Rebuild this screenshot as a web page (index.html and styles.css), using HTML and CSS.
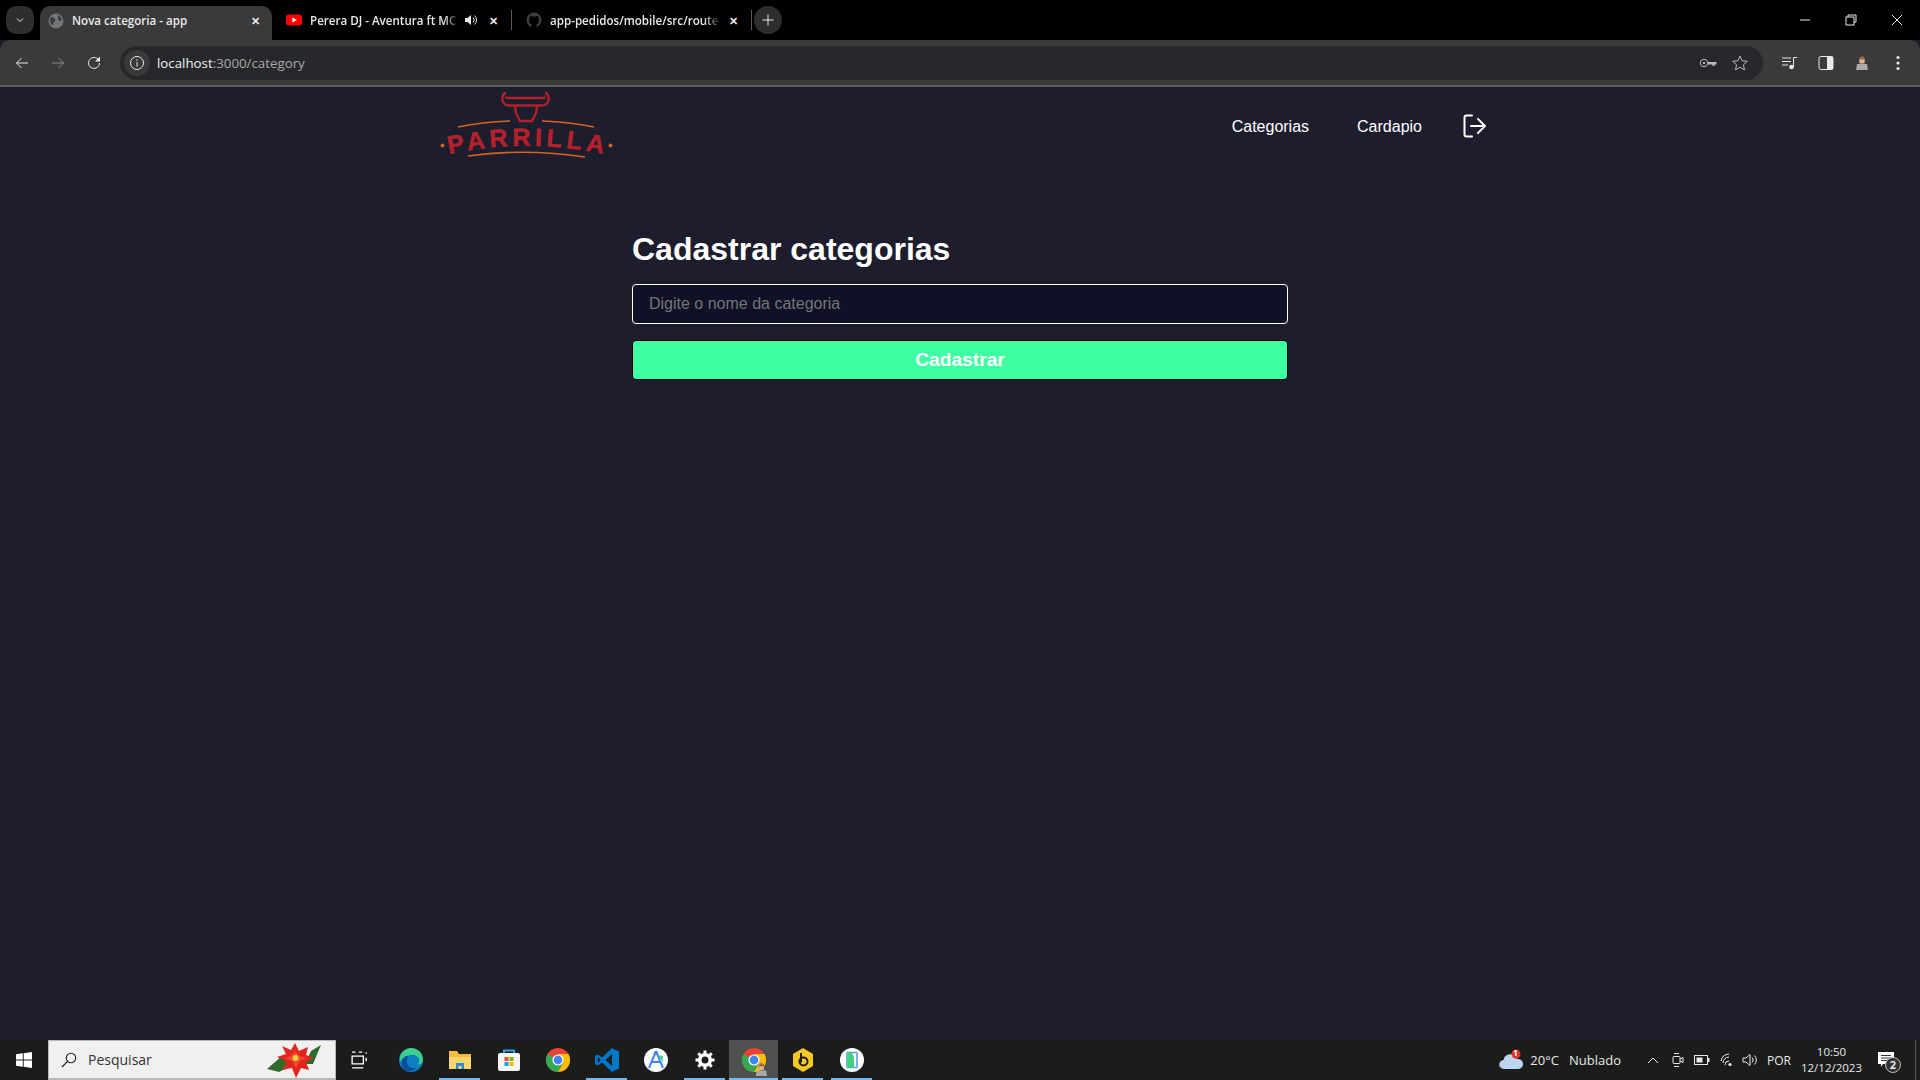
FILE: index.html
```html
<!DOCTYPE html>
<html lang="pt-BR">
<head>
    <meta charset="UTF-8">
    <title>Nova categoria - app</title>
    <link rel="stylesheet" href="styles.css">
</head>
<body>
    <svg class="defs" width="0" height="0">
        <symbol id="chrome" viewBox="0 0 24 24">
            <circle cx="12" cy="12" r="12" fill="#ea4335"/>
            <path d="M12 12 1.6 6A12 12 0 0 0 12 24l5.2-9z" fill="#34a853"/>
            <path d="M12 6h10.4A12 12 0 0 1 12 24l5.2-9z" fill="#fbbc05"/>
            <circle cx="12" cy="12" r="5.6" fill="#fff"/>
            <circle cx="12" cy="12" r="4.4" fill="#4285f4"/>
        </symbol>
        <symbol id="avatar" viewBox="0 0 14 14">
            <path d="M4 4c0-5 6-5 6 0v2H4z" fill="#8a6a55"/>
            <rect x="4.5" y="3.5" width="5" height="4" fill="#e3b299"/>
            <path d="M2 8h10l1 6H1z" fill="#a9a9a9"/>
        </symbol>
    </svg>

    <div class="tabstrip">
        <button class="tab-menu">
            <svg width="12" height="12" viewBox="0 0 12 12"><path d="M3 4.500 6 7.500 9 4.500" class="line" stroke-width="1.600"/></svg>
        </button>
        <div class="tab active">
            <svg class="favicon" width="16" height="16" viewBox="0 0 16 16"><circle cx="8" cy="8" r="7.500" fill="#70757a"/><path d="M3 4c2 0 3 1 4 2s0 2-1 3-1 3-2 3-2-4-2-5zM10 2c1 1 3 2 4 5l-3 1-1-3z" fill="#3a3a3a"/></svg>
            <span class="tab-title">Nova categoria - app</span>
            <span class="tab-close">✕</span>
        </div>
        <div class="tab">
            <svg class="favicon" width="16" height="16" viewBox="0 0 16 16"><rect y="2.500" width="16" height="11" rx="3" fill="#f00"/><path d="M6.400 5.500 11 8l-4.600 2.500z" fill="#fff"/></svg>
            <span class="tab-title fade">Perera DJ - Aventura ft MC</span>
            <svg class="tab-sound" width="16" height="16" viewBox="0 0 16 16"><path d="M2 6h2.500L8 3v10L4.500 10H2z" fill="#e8e8e8"/><path d="M10 5.500a3.500 3.500 0 0 1 0 5M11.500 3.500a6 6 0 0 1 0 9" class="line" stroke-width="1.300"/></svg>
            <span class="tab-close">✕</span>
        </div>
        <i class="tab-sep"></i>
        <div class="tab">
            <svg class="favicon" width="16" height="16" viewBox="0 0 16 16"><circle cx="8" cy="8" r="7.500" fill="#3b4045"/><path d="M5.500 16v-3.500C4 12 3 10.500 3 8.500c0-1 .3-1.800.8-2.400L3.700 3.500 6 4.500h4l2.300-1-.1 2.600c.5.600.8 1.400.8 2.400 0 2-1 3.500-2.500 4V16z" fill="#000"/></svg>
            <span class="tab-title fade">app-pedidos/mobile/src/route</span>
            <span class="tab-close">✕</span>
        </div>
        <i class="tab-sep"></i>
        <button class="tab-new">
            <svg width="14" height="14" viewBox="0 0 14 14"><path d="M7 1.500v11M1.500 7h11" class="line" stroke-width="1.800"/></svg>
        </button>
        <div class="window-controls">
            <svg width="12" height="12" viewBox="0 0 12 12"><path d="M1 6h10" class="line"/></svg>
            <svg width="12" height="12" viewBox="0 0 12 12"><path d="M3 3V1h8v7H9" class="line"/><rect x="1" y="3" width="8" height="8" class="line"/></svg>
            <svg width="12" height="12" viewBox="0 0 12 12"><path d="M1 1l10 10M11 1 1 11" class="line"/></svg>
        </div>
    </div>

    <div class="toolbar">
        <button class="tool">
            <svg width="16" height="16" viewBox="0 0 16 16"><path d="M14 8H2.500M7.500 3l-5 5 5 5" class="line" stroke-width="1.800"/></svg>
        </button>
        <button class="tool">
            <svg width="16" height="16" viewBox="0 0 16 16"><path d="M2 8h11.500M8.500 3l5 5-5 5" class="line dim" stroke-width="1.800"/></svg>
        </button>
        <button class="tool">
            <svg width="16" height="16" viewBox="0 0 16 16"><path d="M13.500 8a5.500 5.500 0 1 1-1.700-4L13.500 5.700" class="line" stroke-width="1.700"/><path d="M14 1.500V6.500H9z" fill="#e8e8e8"/></svg>
        </button>
        <div class="address">
            <span class="site-info">
                <svg width="16" height="16" viewBox="0 0 16 16"><circle cx="8" cy="8" r="6.500" class="line" stroke-width="1.500"/><path d="M8 7v4.500M8 4.300v1.500" class="line" stroke-width="1.500"/></svg>
            </span>
            <span class="url">localhost<span class="url-rest">:3000/category</span></span>
            <svg class="addr-icon" width="20" height="16" viewBox="0 0 20 16"><circle cx="6" cy="8" r="3.800" class="line gray" stroke-width="1.600"/><circle cx="6" cy="8" r="1.200" fill="#b8b8b8"/><path d="M10 7h8.500v2.500h-2V11h-2V9.500H10z" fill="#b8b8b8"/></svg>
            <svg class="addr-icon star" width="18" height="18" viewBox="0 0 18 18"><path d="m9 2 2.100 4.800 5.200.5-3.900 3.500 1.100 5.100L9 13.300l-4.500 2.600 1.100-5.100-3.900-3.500 5.200-.5z" class="line gray" stroke-width="1.500"/></svg>
        </div>
        <div class="toolbar-right">
            <button class="tool">
                <svg width="18" height="14" viewBox="0 0 18 14"><path d="M1 2h9M1 5.500h9M1 9h6" class="line" stroke-width="1.300"/><path d="M12.500 11V1.500H16" class="line" stroke-width="1.400"/><circle cx="10.500" cy="11" r="2.300" fill="#e8e8e8"/></svg>
            </button>
            <button class="tool">
                <svg width="16" height="16" viewBox="0 0 16 16"><rect x="1" y="1.500" width="14" height="13" rx="2" class="line" stroke-width="1.500"/><rect x="9" y="1.500" width="6" height="13" fill="#e8e8e8"/></svg>
            </button>
            <button class="tool">
                <svg width="14" height="16" viewBox="0 0 14 16"><use href="#avatar"/></svg>
            </button>
            <button class="tool">
                <svg width="4" height="16" viewBox="0 0 4 16"><circle cx="2" cy="2.500" r="1.600" fill="#e8e8e8"/><circle cx="2" cy="8" r="1.600" fill="#e8e8e8"/><circle cx="2" cy="13.500" r="1.600" fill="#e8e8e8"/></svg>
            </button>
        </div>
    </div>

    <div class="page">
        <header class="header">
            <svg class="logo" width="220" height="80" viewBox="0 0 220 80">
                <path d="M85 8C81 11 81 19 88 20.500H123C130 19 130 11 126 8M86 12.500C88 13 92 13 94 13H118C120 13 124 13 125 12.500" fill="none" stroke="#b5212b" stroke-width="2.300" stroke-linecap="round"/>
                <path d="M95 21 96 28 100 36H112L116 28 117 21" fill="none" stroke="#b5212b" stroke-width="2.300"/>
                <path d="M38 42Q62 37 90 36M122 36Q150 37 174 42M48 71Q105 63 165 72" fill="none" stroke="#d3641f" stroke-width="1.600"/>
                <circle cx="22.500" cy="60.500" r="2" fill="#d3641f"/>
                <circle cx="190.500" cy="60.500" r="2" fill="#d3641f"/>
                <path id="logo-arc" d="M29 69Q105 53 184 69" fill="none"/>
                <text class="logo-text"><textPath href="#logo-arc" textLength="155" lengthAdjust="spacing">PARRILLA</textPath></text>
            </svg>
            <nav class="nav">
                <a class="nav-link">Categorias</a>
                <a class="nav-link">Cardapio</a>
                <svg class="logout" width="24" height="24" viewBox="0 0 24 24"><path d="M9 1.500H3.500Q1.500 1.500 1.500 3.500V20.500Q1.500 22.500 3.500 22.500H9M8 12H22M15 5l7 7-7 7" fill="none" stroke="#fff" stroke-width="2" stroke-linecap="round" stroke-linejoin="round"/></svg>
            </nav>
        </header>

        <main class="content">
            <h1 class="title">Cadastrar categorias</h1>
            <form class="form">
                <input class="input" type="text" placeholder="Digite o nome da categoria">
                <button class="submit" type="button">Cadastrar</button>
            </form>
        </main>
    </div>

    <footer class="taskbar">
        <div class="start">
            <svg width="16" height="16" viewBox="0 0 16 16"><path d="M0 2.300 6.800 1.300V7.500H0zM7.700 1.200 16 0V7.500H7.700zM0 8.500H6.800V14.700L0 13.700zM7.700 8.500H16V16L7.700 14.800z" fill="#fff"/></svg>
        </div>
        <div class="search">
            <svg width="16" height="16" viewBox="0 0 16 16"><circle cx="10" cy="6" r="4.700" fill="none" stroke="#222" stroke-width="1.100"/><path d="M6.600 9.400 1 15" stroke="#222" stroke-width="1.300"/></svg>
            <span class="search-text">Pesquisar</span>
            <svg class="flower" width="56" height="36" viewBox="0 0 56 36">
                <path d="M0 27 15 14 24 24 12 30zM54 3 44 9 38 22 46 22z" fill="#2f6b2a"/>
                <path d="M28 1 32 9 41 5 39 13 47 16 39 20 42 28 34 26 29 36 25 26 15 28 20 20 10 15 19 12 15 4 24 8z" fill="#e3261d"/>
                <path d="M28 9 33 14 39 16 33 19 29 26 25 19 18 16 24 14z" fill="#f04a35"/>
                <circle cx="28.500" cy="16" r="3" fill="#e8d23c"/>
            </svg>
        </div>
        <div class="apps">
            <div class="app first">
                <svg width="18" height="18" viewBox="0 0 16 16"><path d="M1 1h3M7 1h3M1 15h10M1 4.500h10v7H1zM13.500 1v1.500M13.500 6v3" fill="none" stroke="#fff" stroke-width="1.200"/></svg>
            </div>
            <div class="app">
                <svg width="24" height="24" viewBox="0 0 24 24"><circle cx="12" cy="12" r="12" fill="#0f7fc5"/><path d="M1 9C3 2 9 0 12 0c7 0 12 5 12 12 0 3-3 5-6 4.500 2-1 3-3 2-5.500-1-3-5-5-9-4C6 8 3 10 1 14z" fill="#3ccf8e"/><path d="M8 14c0 4 4 7 9 6-3 4-9 4-12 1-2-2-3-5-2-8 1-3 3-5 6-5-1 2-1 4-1 6z" fill="#0a4f9c"/></svg>
            </div>
            <div class="app on">
                <svg width="22" height="20" viewBox="0 0 22 20"><path d="M0 1h8l2 3h12v15H0z" fill="#f5bd3e"/><path d="M0 7h22v12H0z" fill="#fad672"/><path d="M7 13h8v6h-2.500v-3h-3v3H7z" fill="#2d8ad4"/></svg>
            </div>
            <div class="app">
                <svg width="24" height="24" viewBox="0 0 24 24"><path d="M7 6V2.500h10V6" fill="none" stroke="#28a8ea" stroke-width="2"/><rect x="1" y="5" width="22" height="18" rx="2" fill="#f4f4f4"/><rect x="7.500" y="9" width="4" height="4" fill="#f25022"/><rect x="12.500" y="9" width="4" height="4" fill="#7fba00"/><rect x="7.500" y="14" width="4" height="4" fill="#00a4ef"/><rect x="12.500" y="14" width="4" height="4" fill="#ffb900"/></svg>
            </div>
            <div class="app">
                <svg width="24" height="24"><use href="#chrome"/></svg>
            </div>
            <div class="app on">
                <svg width="24" height="24" viewBox="0 0 24 24"><path d="M17 0 24 3.500V20.500L17 24 7 14.500 2.800 17.500 0 16V8L2.800 6.500 7 9.500z" fill="#0078c8"/><path d="M17 6 10.500 12 17 18z" fill="#1d1f1d"/><path d="M2.800 9 5.500 12 2.800 15z" fill="#1d1f1d"/></svg>
            </div>
            <div class="app">
                <svg width="24" height="24" viewBox="0 0 24 24"><circle cx="12" cy="12" r="12" fill="#fff"/><path d="M12 3 5 20M12 3l7 17M8 14h8" fill="none" stroke="#4285f4" stroke-width="2"/><circle cx="12" cy="5" r="2" fill="#4285f4"/><path d="M14 7l5 1v6z" fill="#3ddc84"/></svg>
            </div>
            <div class="app on">
                <svg width="20" height="20" viewBox="0 0 20 20"><circle cx="10" cy="10" r="5.300" fill="none" stroke="#fff" stroke-width="3.600"/><path d="M10 .5v3M10 16.500v3M.5 10h3M16.500 10h3M3.300 3.300l2.100 2.100M14.600 14.600l2.100 2.100M3.300 16.700l2.100-2.100M14.600 5.400l2.100-2.100" stroke="#fff" stroke-width="3"/></svg>
            </div>
            <div class="app active on">
                <svg width="24" height="24"><use href="#chrome"/></svg>
                <svg class="app-badge" width="13" height="13"><use href="#avatar"/></svg>
            </div>
            <div class="app on">
                <svg width="20" height="24" viewBox="0 0 20 24"><path d="M10 0 20 6V18L10 24 0 18V6z" fill="#f5c827"/><path d="M8 5v9.500" stroke="#1d1f1d" stroke-width="2"/><circle cx="10.500" cy="13.500" r="4" fill="none" stroke="#1d1f1d" stroke-width="2"/></svg>
            </div>
            <div class="app on">
                <svg width="24" height="24" viewBox="0 0 24 24"><circle cx="12" cy="12" r="12" fill="#fff"/><rect x="7" y="4.500" width="10" height="15" rx="1" fill="none" stroke="#5c9cf5" stroke-width="1.600"/><path d="M7 4.500h5l2 5v10H7z" fill="#41d27e"/></svg>
            </div>
        </div>
        <div class="tray">
            <div class="weather">
                <svg width="26" height="22" viewBox="0 0 26 22"><path d="M5 20a4.500 4.500 0 0 1-.5-9A7 7 0 0 1 18 10a5 5 0 0 1 2 10z" fill="#bcd6f2"/><circle cx="17" cy="5" r="4.500" fill="#e0332e"/></svg>
                <span class="badge-num">1</span>
            </div>
            <span class="temp">20°C</span>
            <span class="cond">Nublado</span>
            <svg class="tray-caret" width="12" height="8" viewBox="0 0 12 8"><path d="M1 7 6 2l5 5" class="line" stroke-width="1.100"/></svg>
            <svg class="tray-meet" width="12" height="16" viewBox="0 0 12 16"><path d="M2 1.500h5M2 14.500h5" class="line" stroke-width="1"/><rect x="1" y="4.500" width="7" height="7" rx="1" class="line" stroke-width="1.100"/><path d="M8 7l3-1.500v5L8 9" class="line" stroke-width="1.100"/></svg>
            <svg class="tray-batt" width="16" height="10" viewBox="0 0 16 10"><rect x=".5" y=".5" width="13" height="9" class="line" stroke-width="1"/><rect x="2.500" y="2.500" width="6" height="5" fill="#e8e8e8"/><rect x="14" y="3" width="1.500" height="4" fill="#e8e8e8"/></svg>
            <svg class="tray-wifi" width="14" height="14" viewBox="0 0 14 14"><path d="M1 8a8 8 0 0 1 8-7M3 10a6 6 0 0 1 6-6M5 12a4 4 0 0 1 4-4" class="line" stroke-width="1"/><circle cx="10" cy="11.500" r="1.600" fill="#e8e8e8"/></svg>
            <svg class="tray-sound" width="16" height="14" viewBox="0 0 16 14"><path d="M1 5h3l4-3.500v11L4 9H1z" class="line" stroke-width="1"/><path d="M10 4.500a3.500 3.500 0 0 1 0 5M12.500 2.500a6.500 6.500 0 0 1 0 9" class="line" stroke-width="1"/></svg>
            <span class="lang">POR</span>
            <div class="clock"><span>10:50</span><span>12/12/2023</span></div>
            <div class="notif">
                <svg width="16" height="16" viewBox="0 0 16 16"><path d="M0 0h16v12H5l-2 3v-3H0z" fill="#fff"/><path d="M3 3.500h10M3 6h10M3 8.500h7" stroke="#333" stroke-width="1"/></svg>
                <span class="notif-count">2</span>
            </div>
            <i class="show-desktop"></i>
        </div>
    </footer>
</body>
</html>
```

FILE: styles.css
```css
* {
    box-sizing: border-box;
}
html, body {
    height: 100%;
}
body {
    margin: 0;
    display: flex;
    flex-direction: column;
    height: 1080px;
    overflow: hidden;
    background-color: #1d1d2e;
    font-family: 'Liberation Sans', Arial, sans-serif;
}
button {
    border: none;
    background: none;
    padding: 0;
}
.defs {
    position: absolute;
}
.line {
    fill: none;
    stroke: #e8e8e8;
    stroke-width: 1;
}
.line.dim {
    stroke: #8a8a8a;
}
.line.gray {
    stroke: #b8b8b8;
}

/* browser tabs */
.tabstrip {
    display: flex;
    align-items: flex-end;
    flex: 0 0 40px;
    height: 40px;
    padding-left: 6px;
    background-color: #000;
    color: #e8e8e8;
    font-family: 'Open Sans', 'Noto Sans', sans-serif;
    font-size: 11.6px;
    font-weight: 600;
}
.tab-menu {
    display: flex;
    align-items: center;
    justify-content: center;
    width: 28px;
    height: 28px;
    margin-bottom: 6px;
    border-radius: 10px;
    background-color: #2e2e2e;
}
.tab {
    display: flex;
    align-items: center;
    width: 239px;
    height: 34px;
    padding: 0 10px 6px 14px;
}
.tab.active {
    width: 232px;
    margin-left: 6px;
    padding: 0 9px 5px 8px;
    border-radius: 10px 10px 0 0;
    background-color: #3a3a3a;
}
.tab-title {
    flex: 1;
    margin-left: 8px;
    overflow: hidden;
    white-space: nowrap;
}
.tab-title.fade {
    margin-right: 4px;
    -webkit-mask-image: linear-gradient(to right, #000 90%, transparent);
    mask-image: linear-gradient(to right, #000 90%, transparent);
}
.tab-sound {
    flex: none;
    margin-right: 6px;
}
.tab-close {
    flex: none;
    width: 16px;
    font-size: 11px;
    text-align: center;
}
.tab-sep {
    flex: none;
    width: 1px;
    height: 20px;
    margin-bottom: 10px;
    background-color: #5a5a5a;
}
.tab-new {
    display: flex;
    align-items: center;
    justify-content: center;
    width: 28px;
    height: 28px;
    margin: 0 0 6px 2px;
    border-radius: 50%;
    background-color: #2e2e2e;
}
.window-controls {
    display: flex;
    align-self: center;
    gap: 34px;
    margin-left: auto;
    padding-right: 17px;
}

/* toolbar */
.toolbar {
    display: flex;
    align-items: center;
    flex: 0 0 47px;
    padding: 1px 4px 0;
    border-bottom: 2px solid #5c5c5c;
    background-color: #3a3a3a;
    border-radius: 10px 10px 0 0;
}
.tool {
    display: flex;
    align-items: center;
    justify-content: center;
    flex: none;
    width: 36px;
    height: 34px;
}
.address {
    display: flex;
    align-items: center;
    flex: 1;
    height: 34px;
    margin-left: 8px;
    padding: 0 14px 0 4px;
    border-radius: 17px;
    background-color: #27282b;
}
.site-info {
    display: flex;
    align-items: center;
    justify-content: center;
    width: 26px;
    height: 26px;
    border-radius: 50%;
    background-color: #3a3a3a;
}
.url {
    flex: 1;
    margin-left: 7px;
    color: #f0f0f0;
    font-family: 'Open Sans', 'Noto Sans', sans-serif;
    font-size: 13.3px;
}
.url-rest {
    color: #a8a8a8;
}
.addr-icon {
    flex: none;
}
.addr-icon.star {
    margin-left: 13px;
}
.toolbar-right {
    display: flex;
    margin-left: 9px;
}

/* page */
.page {
    flex: 1;
    display: flex;
    flex-direction: column;
    align-items: center;
    background-color: #1d1d2e;
}
.header {
    display: flex;
    align-items: flex-start;
    justify-content: space-between;
    width: 1120px;
    height: 80px;
    padding: 0 33px 0 20px;
}
.logo {
    flex: none;
    margin-top: -2px;
}
.logo-text {
    fill: #b5212b;
    stroke: #b5212b;
    stroke-width: 0.5;
    font-family: 'Liberation Sans', Arial, sans-serif;
    font-size: 25px;
    font-weight: 700;
}
.nav {
    display: flex;
    align-items: center;
    height: 80px;
    gap: 48px;
}
.nav-link {
    color: #fff;
    font-size: 16px;
}
.logout {
    flex: none;
    margin-left: -7px;
    margin-bottom: 2px;
}
.content {
    width: 656px;
    margin-top: 54px;
}
.title {
    margin: 0;
    height: 62px;
    color: #fff;
    font-size: 32px;
    line-height: 37px;
    padding-top: 10px;
    font-weight: 700;
}
.form {
    display: flex;
    flex-direction: column;
    gap: 16px;
    margin-top: 1px;
}
.input {
    height: 40px;
    padding: 0 16px;
    border: 1px solid #fff;
    border-radius: 4px;
    background-color: #101026;
    color: #fff;
    font-family: inherit;
    font-size: 16px;
}
.input::placeholder {
    color: #757575;
}
.submit {
    height: 40px;
    border: 1px solid #000;
    border-radius: 4px;
    background-color: #3fffa3;
    color: #fff;
    font-family: inherit;
    font-size: 19.2px;
    font-weight: 700;
}

/* taskbar */
.taskbar {
    display: flex;
    flex: 0 0 40px;
    height: 40px;
    background-color: #1b1d1b;
    color: #e8e8e8;
    font-family: 'Open Sans', 'Noto Sans', sans-serif;
    font-size: 13px;
}
.start {
    display: flex;
    align-items: center;
    justify-content: center;
    width: 48px;
}
.search {
    display: flex;
    align-items: center;
    width: 288px;
    padding-left: 12px;
    border: 1px solid #b8b8b8;
    border-bottom-width: 2px;
    background-color: #f0f0f0;
    color: #333;
    font-size: 14px;
}
.search-text {
    flex: 1;
    margin-left: 11px;
}
.flower {
    margin-right: 12px;
}
.apps {
    display: flex;
}
.app {
    position: relative;
    display: flex;
    align-items: center;
    justify-content: center;
    width: 49px;
}
.app.first {
    width: 48px;
    margin-right: 2px;
}
.app.on::after {
    content: '';
    position: absolute;
    left: 4px;
    right: 4px;
    bottom: 0;
    height: 2px;
    background-color: #76b9ed;
}
.app.active {
    background-color: #4f514f;
}
.app.active::after {
    left: 0;
    right: 0;
}
.app-badge {
    position: absolute;
    right: 10px;
    bottom: 4px;
}
.tray {
    display: flex;
    align-items: center;
    flex: 1;
    justify-content: flex-end;
}
.weather {
    position: relative;
    display: flex;
}
.badge-num {
    position: absolute;
    left: 14px;
    top: -2px;
    width: 6px;
    color: #fff;
    font-size: 8px;
    font-weight: 700;
}
.temp {
    margin-left: 5px;
}
.cond {
    margin-left: 10px;
}
.tray-caret {
    margin-left: 26px;
}
.tray-meet {
    margin-left: 13px;
}
.tray-batt {
    margin-left: 10px;
}
.tray-wifi {
    margin-left: 10px;
}
.tray-sound {
    margin-left: 8px;
}
.lang {
    margin-left: 9px;
    font-size: 12px;
}
.clock {
    display: flex;
    flex-direction: column;
    align-items: center;
    margin-left: 10px;
    font-size: 11.5px;
    line-height: 16px;
}
.notif {
    position: relative;
    display: flex;
    margin-left: 16px;
}
.notif-count {
    position: absolute;
    left: 7px;
    top: 5px;
    width: 16px;
    height: 16px;
    border: 1px solid #bbb;
    border-radius: 50%;
    background-color: #333;
    font-size: 11px;
    font-weight: 700;
    line-height: 14px;
    text-align: center;
}
.show-desktop {
    width: 1px;
    height: 40px;
    margin-left: 21px;
    margin-right: 4px;
    background-color: #555;
}
```
